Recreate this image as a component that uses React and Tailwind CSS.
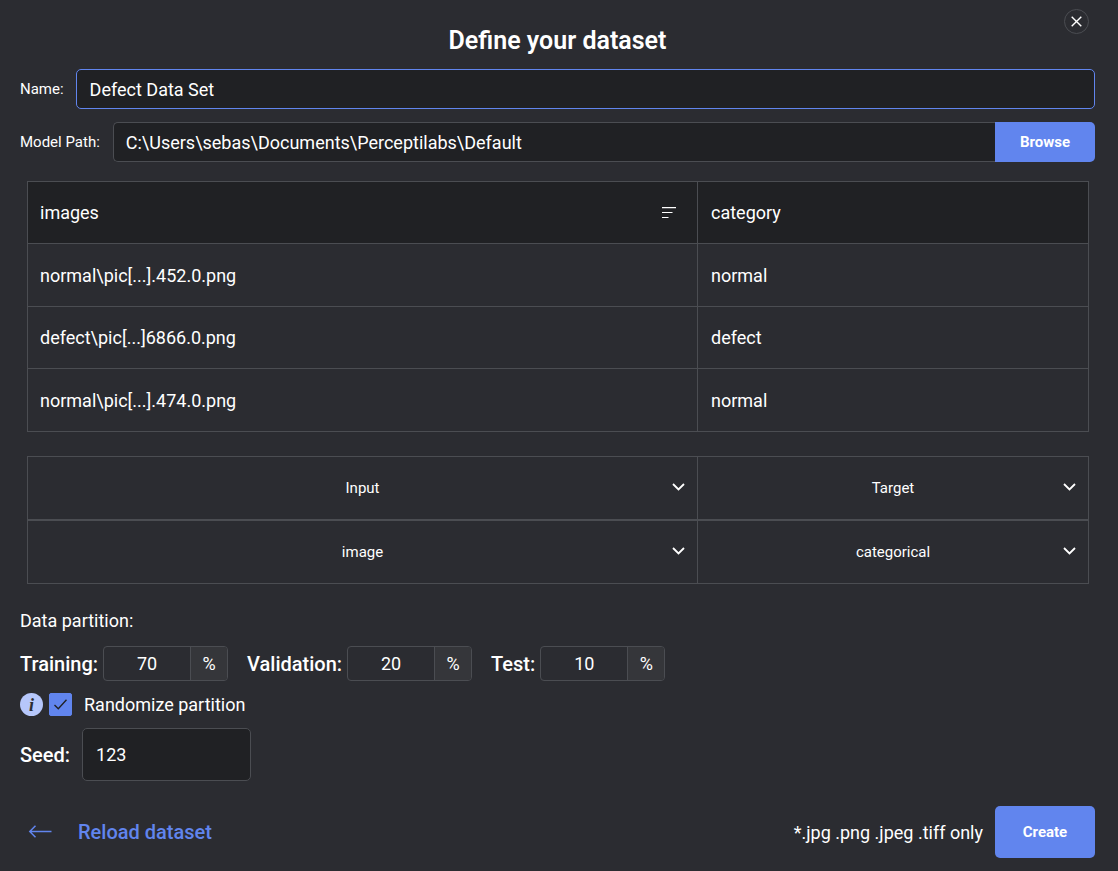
import React from "react";

const rows = [
  ["normal\\pic[...].452.0.png", "normal"],
  ["defect\\pic[...]6866.0.png", "defect"],
  ["normal\\pic[...].474.0.png", "normal"],
];

const columnTypes = [
  { label: "Use of images", value: "Input", options: ["Input", "Target"] },
  { label: "Use of category", value: "Target", options: ["Target", "Input"] },
  { label: "Type of images", value: "image", options: ["image", "categorical"] },
  { label: "Type of category", value: "categorical", options: ["categorical", "image"] },
];

const partitions = [
  { id: "training", label: "Training:", value: 70 },
  { id: "validation", label: "Validation:", value: 20 },
  { id: "test", label: "Test:", value: 10 },
];

function TypeSelect({ label, value, options }) {
  return (
    <div className="relative border-y border-l border-[#4b4d52] even:border-r">
      <select
        aria-label={label}
        defaultValue={value}
        className="block h-[62px] w-full appearance-none bg-transparent px-10 text-center text-[15px] [text-align-last:center] outline-none"
      >
        {options.map((o) => (
          <option key={o} className="bg-[#2b2c31]">{o}</option>
        ))}
      </select>
      <svg className="pointer-events-none absolute right-3 top-[26px]" width="13" height="8" viewBox="0 0 13 8" fill="none" stroke="currentColor" strokeWidth="1.8" aria-hidden="true">
        <path d="M1 1l5.5 5.5L12 1" />
      </svg>
    </div>
  );
}

function Partition({ id, label, value }) {
  return (
    <div className="flex items-center gap-[5px]">
      <label htmlFor={id} className="text-[20px] font-medium leading-6">{label}</label>
      <div className="flex h-[35px] w-[125px] overflow-hidden rounded border border-[#4b4d52]">
        <input id={id} type="text" inputMode="numeric" defaultValue={value} className="w-[86px] bg-transparent text-center text-[18px] outline-none" />
        <span className="flex flex-1 items-center justify-center border-l border-[#4b4d52] bg-[#35363a] text-[18px]">%</span>
      </div>
    </div>
  );
}

export default function App() {
  return (
    <main className="relative min-h-screen bg-[#2b2c31] pb-[13px] pl-5 pr-[23px] pt-[25px] font-['Roboto',sans-serif] text-white">
      <button type="button" aria-label="Close" className="absolute right-[29px] top-[9px] flex size-[25px] items-center justify-center rounded-full border border-[#4b4d52]">
        <svg width="11" height="11" viewBox="0 0 11 11" fill="none" stroke="currentColor" strokeWidth="1.4" aria-hidden="true">
          <path d="M0.7 0.7l9.6 9.6M10.3 0.7L0.7 10.3" />
        </svg>
      </button>

      <h1 className="text-center text-[25px] font-semibold leading-8">Define your dataset</h1>

      <div className="mt-3 flex items-center gap-3">
        <label htmlFor="name" className="text-[15px]">Name:</label>
        <input id="name" type="text" defaultValue="Defect Data Set" className="h-10 min-w-0 flex-1 rounded-[5px] border border-[#6185ee] bg-[#202124] px-[13px] text-[18px] outline-none" />
      </div>

      <div className="mt-[13px] flex items-center">
        <label htmlFor="path" className="mr-[13px] text-[15px]">Model Path:</label>
        <input id="path" type="text" defaultValue="C:\Users\sebas\Documents\Perceptilabs\Default" className="h-10 min-w-0 flex-1 rounded-l-[5px] border border-r-0 border-[#4b4d52] bg-[#202124] px-3 text-[18px] outline-none" />
        <button type="button" className="h-10 w-[100px] rounded-r-[5px] bg-[#6185ee] text-[15px] font-bold">Browse</button>
      </div>

      <div className="ml-[7px] mr-[6px]">
        <table className="mt-[19px] w-full table-fixed border-collapse text-left text-[18px]">
          <colgroup>
            <col className="w-[63.15%]" />
            <col />
          </colgroup>
          <thead className="bg-[#202124]">
            <tr className="h-[62px]">
              <th scope="col" className="border border-[#4b4d52] pl-3 pr-[21px] font-normal">
                <div className="flex items-center justify-between">
                  images
                  <button type="button" aria-label="Sort images">
                    <svg width="14" height="12" viewBox="0 0 14 12" fill="none" stroke="currentColor" strokeWidth="1.2" aria-hidden="true">
                      <path d="M0 0.6h14M0 5.5h10.5M0 10.5h6.5" />
                    </svg>
                  </button>
                </div>
              </th>
              <th scope="col" className="border border-[#4b4d52] px-[13px] font-normal">category</th>
            </tr>
          </thead>
          <tbody>
            {rows.map(([image, category], i) => (
              <tr key={i} className="h-[62px] odd:h-[63px]">
                <td className="border border-[#4b4d52] px-3">{image}</td>
                <td className="border border-[#4b4d52] px-[13px]">{category}</td>
              </tr>
            ))}
          </tbody>
        </table>

        <div className="mt-6 grid grid-cols-[670fr_392fr]">
          {columnTypes.map((c) => (
            <TypeSelect key={c.label} {...c} />
          ))}
        </div>
      </div>

      <h2 className="mt-[25px] text-[18px] leading-6">Data partition:</h2>
      <div className="mt-[13px] flex flex-wrap gap-x-[19px] gap-y-3">
        {partitions.map((p) => (
          <Partition key={p.id} {...p} />
        ))}
      </div>

      <div className="mt-3 flex h-[23px] items-center">
        <span className="mr-[6px] flex size-[23px] items-center justify-center rounded-full bg-[#b6c7fb] font-['Liberation_Serif',serif] text-[18px] font-bold italic leading-none text-[#2b2c31]">i</span>
        <span className="relative mr-3 flex size-[23px]">
          <input id="randomize" type="checkbox" defaultChecked className="peer size-[23px] appearance-none rounded-[2px] border border-[#6185ee] checked:bg-[#6185ee]" />
          <svg className="pointer-events-none absolute left-[5px] top-[6px] hidden peer-checked:block" width="13" height="11" viewBox="0 0 13 11" fill="none" stroke="#202124" strokeWidth="1.4" aria-hidden="true">
            <path d="M0.5 6L4.3 9.8L12.5 0.8" />
          </svg>
        </span>
        <label htmlFor="randomize" className="text-[18px]">Randomize partition</label>
      </div>

      <div className="mt-3 flex items-center gap-3">
        <label htmlFor="seed" className="text-[20px] font-medium">Seed:</label>
        <input id="seed" type="text" defaultValue="123" className="h-[53px] w-[169px] rounded-[5px] border border-[#4b4d52] bg-[#202124] px-[13px] text-[18px] outline-none" />
      </div>

      <footer className="mt-[25px] flex items-center justify-between">
        <button type="button" className="ml-2 flex items-center gap-[26px] text-[20px] font-medium text-[#6185ee]">
          <svg width="24" height="14" viewBox="0 0 24 14" fill="none" stroke="currentColor" strokeWidth="1.5" aria-hidden="true">
            <path d="M23.5 6.5H2M7.5 0.8L1.8 6.5L7.5 12.2" />
          </svg>
          Reload dataset
        </button>
        <div className="flex items-center gap-3">
          <p className="text-[18px]">*.jpg .png .jpeg .tiff only</p>
          <button type="button" className="h-[52px] w-[100px] rounded-[5px] bg-[#6185ee] text-[15px] font-bold">Create</button>
        </div>
      </footer>
    </main>
  );
}
